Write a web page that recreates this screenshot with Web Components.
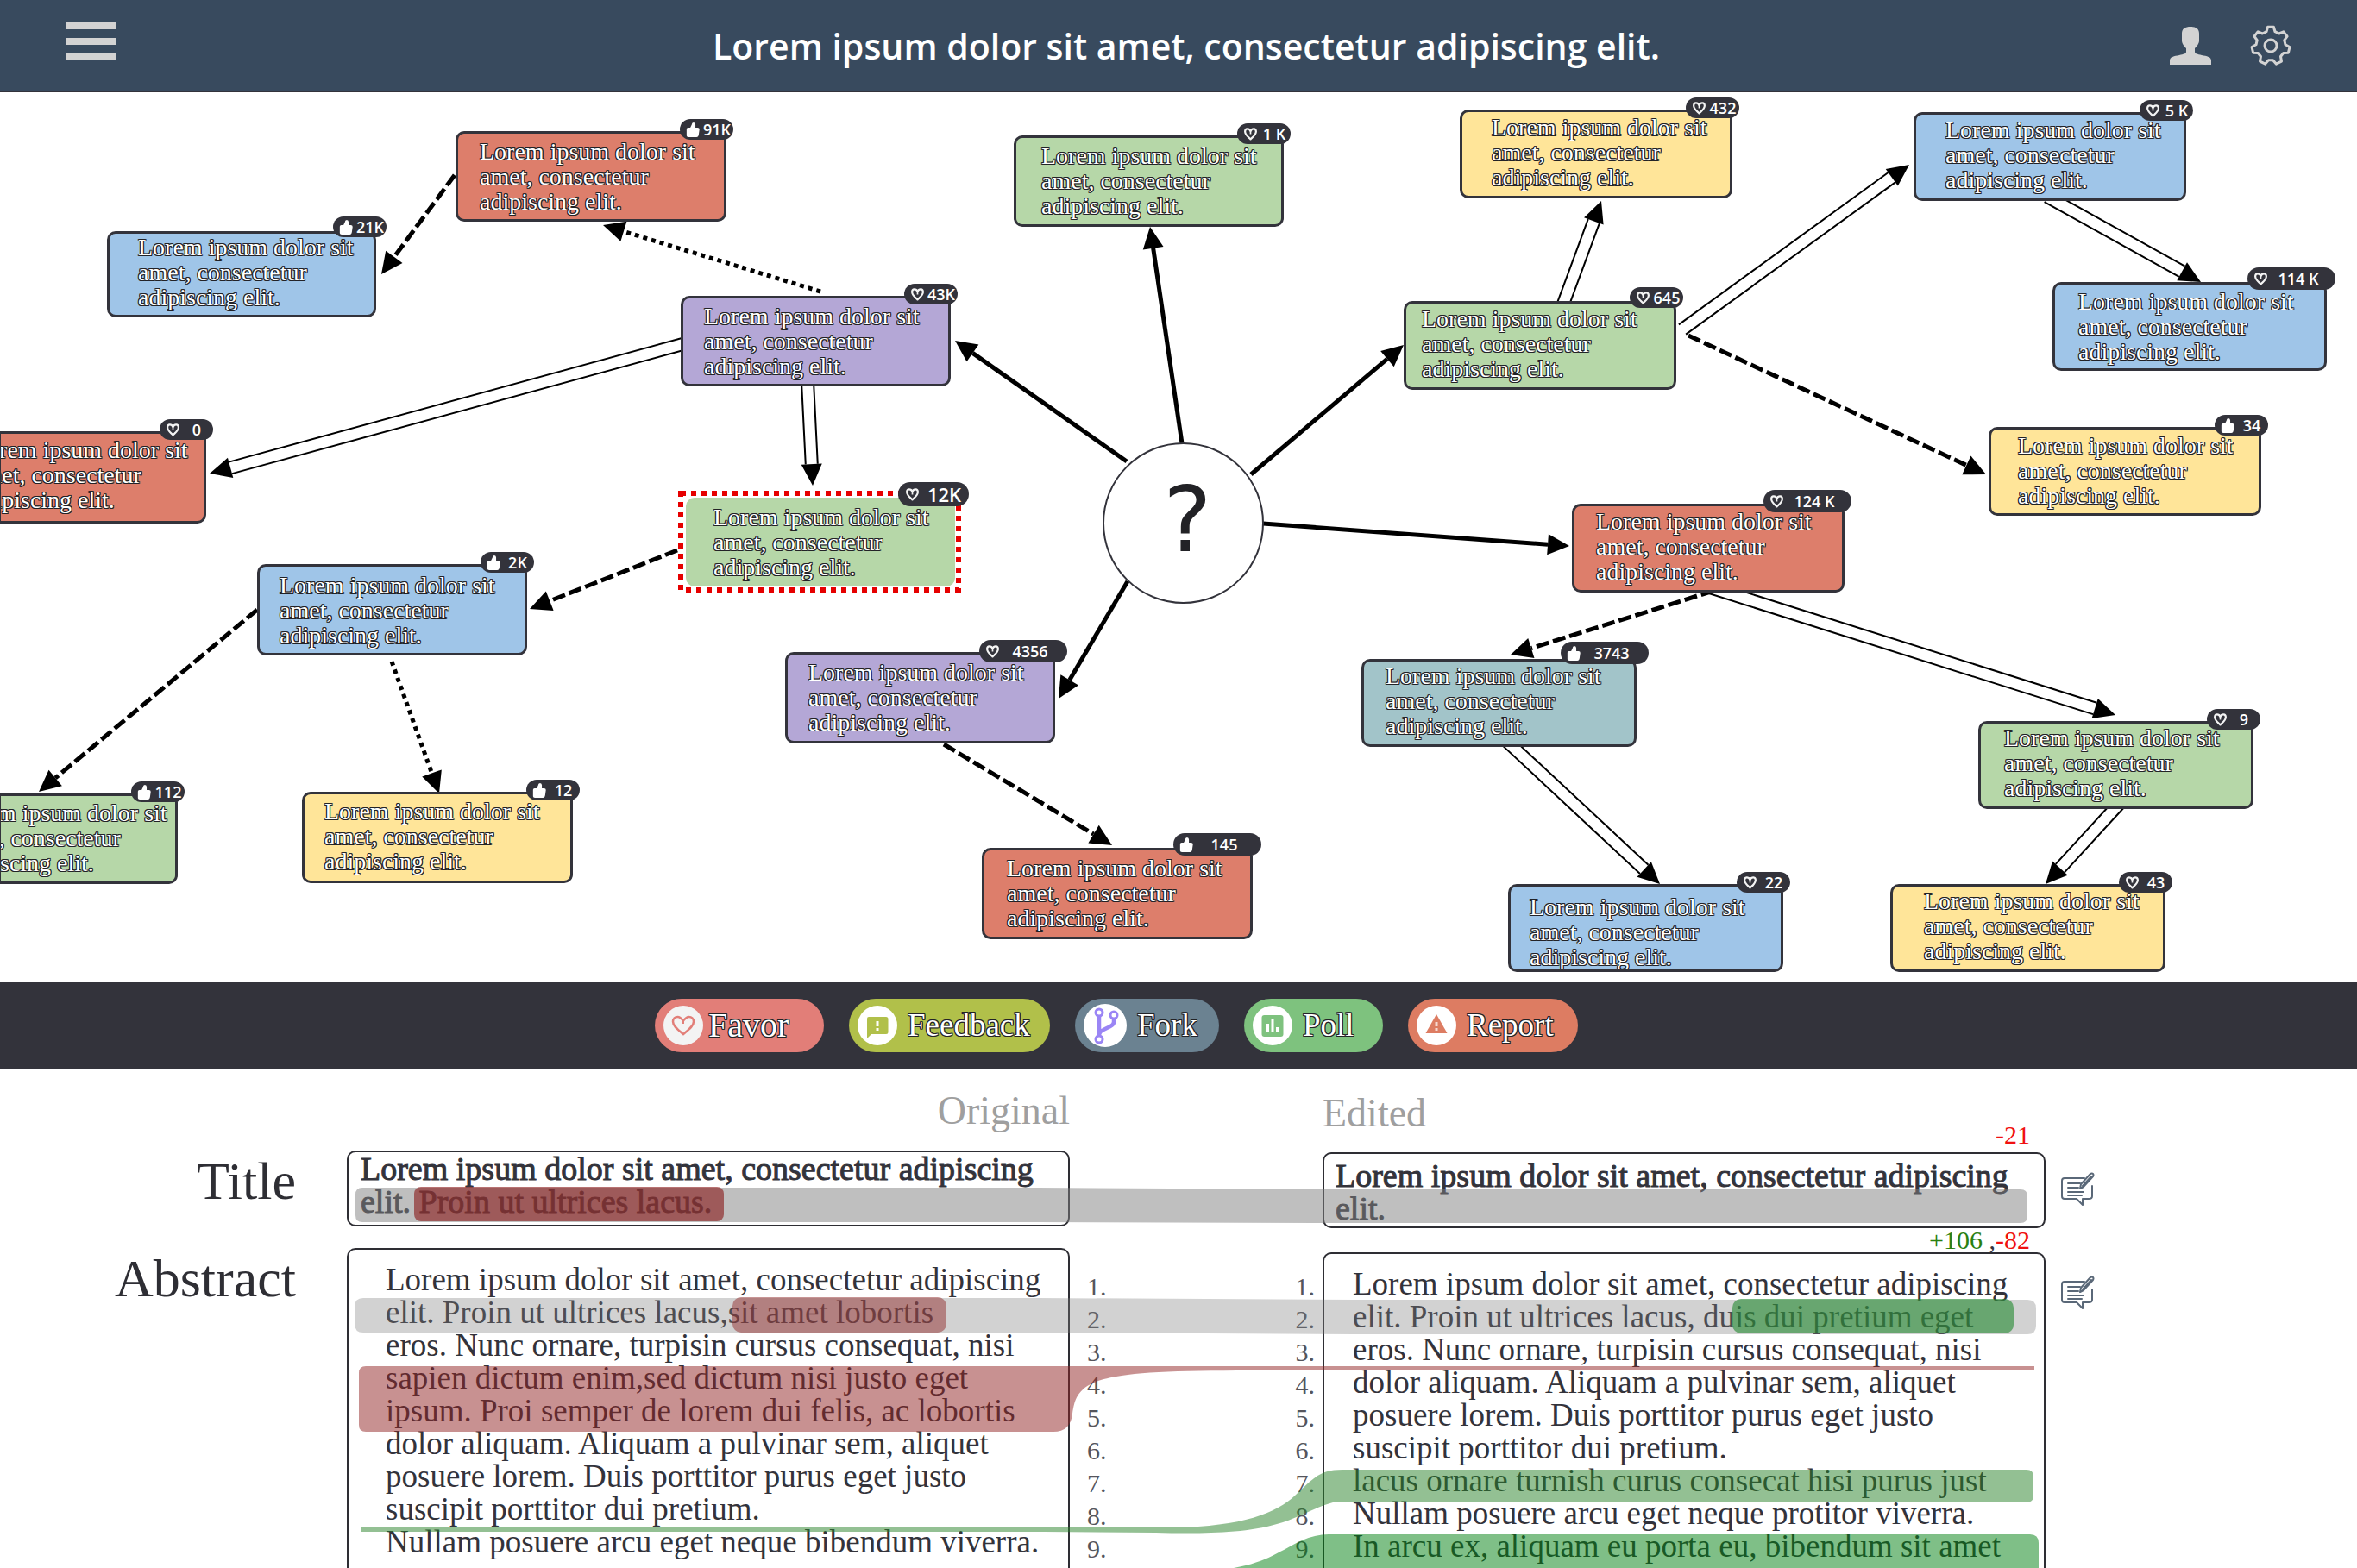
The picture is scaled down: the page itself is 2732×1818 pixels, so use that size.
<!DOCTYPE html>
<html lang="la">
<head>
<meta charset="utf-8">
<title>Idea map</title>
<style>
  html, body { margin: 0; }
  body {
    display: flex;
    flex-direction: column;
    height: 100vh;
    overflow: hidden;
    background: #fff;
    color: #33333b;
    font-family: "Liberation Serif", "Times New Roman", serif;
  }
  app-header, idea-map, action-bar { flex: none; }
  compare-view { flex: 1; min-height: 0; }
</style>
</head>
<body>
<app-header>Lorem ipsum dolor sit amet, consectetur adipiscing elit.</app-header>

<idea-map>
  <idea-node at="528,45" size="314,105" text="28,9" tone="red" icon="thumb" votes="91K">Lorem ipsum dolor sit amet, consectetur adipiscing elit.</idea-node>
  <idea-node at="124,161" size="312,100" text="36,4" tone="blue" icon="thumb" votes="21K" badge="12,17">Lorem ipsum dolor sit amet, consectetur adipiscing elit.</idea-node>
  <idea-node at="0,393" size="239,107" text="-30,7" tone="red" icon="heart" votes="0" cut>Lorem ipsum dolor sit amet, consectetur adipiscing elit.</idea-node>
  <idea-node at="789,236" size="313,105" text="27,9" tone="purple" icon="heart" votes="43K">Lorem ipsum dolor sit amet, consectetur adipiscing elit.</idea-node>
  <idea-node at="1175,50" size="313,106" text="32,9" tone="green" icon="heart" votes="1 K">Lorem ipsum dolor sit amet, consectetur adipiscing elit.</idea-node>
  <idea-node at="1692,20" size="316,103" text="37,6" tone="yellow" icon="heart" votes="432">Lorem ipsum dolor sit amet, consectetur adipiscing elit.</idea-node>
  <idea-node at="2218,23" size="316,103" text="37,6" tone="blue" icon="heart" votes="5 K">Lorem ipsum dolor sit amet, consectetur adipiscing elit.</idea-node>
  <idea-node at="2379,220" size="318,103" text="30,8" tone="blue" icon="heart" votes="114 K" badge="10,17" wide>Lorem ipsum dolor sit amet, consectetur adipiscing elit.</idea-node>
  <idea-node at="1627,242" size="316,103" text="21,6" tone="green" icon="heart" votes="645" badge="8,16">Lorem ipsum dolor sit amet, consectetur adipiscing elit.</idea-node>
  <idea-node at="2305,388" size="316,103" text="34,7" tone="yellow" icon="thumb" votes="34">Lorem ipsum dolor sit amet, consectetur adipiscing elit.</idea-node>
  <idea-node at="1822,477" size="316,103" text="28,6" tone="red" icon="heart" votes="124 K" badge="8,16" wide>Lorem ipsum dolor sit amet, consectetur adipiscing elit.</idea-node>
  <idea-node at="1578,657" size="319,102" text="28,5" tone="teal" icon="thumb" votes="3743" badge="14,20" wide>Lorem ipsum dolor sit amet, consectetur adipiscing elit.</idea-node>
  <idea-node at="2293,729" size="319,102" text="30,5" tone="green" icon="heart" votes="9">Lorem ipsum dolor sit amet, consectetur adipiscing elit.</idea-node>
  <idea-node at="1748,918" size="319,102" text="25,12" tone="blue" icon="heart" votes="22">Lorem ipsum dolor sit amet, consectetur adipiscing elit.</idea-node>
  <idea-node at="2191,918" size="319,102" text="39,5" tone="yellow" icon="heart" votes="43">Lorem ipsum dolor sit amet, consectetur adipiscing elit.</idea-node>
  <idea-node at="298,547" size="313,106" text="26,10" tone="blue" icon="thumb" votes="2K">Lorem ipsum dolor sit amet, consectetur adipiscing elit.</idea-node>
  <idea-node at="0,813" size="206,105" text="-54,8" tone="green" icon="thumb" votes="112" cut>Lorem ipsum dolor sit amet, consectetur adipiscing elit.</idea-node>
  <idea-node at="350,811" size="314,106" text="26,8" tone="yellow" icon="thumb" votes="12">Lorem ipsum dolor sit amet, consectetur adipiscing elit.</idea-node>
  <idea-node at="795,470" size="312,103" text="32,8" tone="green" icon="heart" votes="12K" badge="16,18" selected>Lorem ipsum dolor sit amet, consectetur adipiscing elit.</idea-node>
  <idea-node at="910,649" size="313,106" text="27,9" tone="purple" icon="heart" votes="4356" badge="14,14" wide>Lorem ipsum dolor sit amet, consectetur adipiscing elit.</idea-node>
  <idea-node at="1138,876" size="314,106" text="29,9" tone="red" icon="thumb" votes="145" badge="10,17" wide>Lorem ipsum dolor sit amet, consectetur adipiscing elit.</idea-node>
</idea-map>

<action-bar>
  <action-button icon="favor" style="--tone:#e27e78;--width:196px;--gap:6px;--size:40px">Favor</action-button>
  <action-button icon="feedback" style="--tone:#b1c04a;--width:233px">Feedback</action-button>
  <action-button icon="fork" style="--tone:#6b8291;--width:167px">Fork</action-button>
  <action-button icon="poll" style="--tone:#7ec27e;--width:161px">Poll</action-button>
  <action-button icon="report" style="--tone:#dd7c62;--width:197px">Report</action-button>
</action-bar>

<compare-view></compare-view>

<script>
const ICONS = {
  heart: '<svg viewBox="0 0 20 20"><path d="M10 17C7 14 2.500 11 2.500 6.500C2.500 2 8 1.500 10 6C12 1.500 17.500 2 17.500 6.500C17.500 11 13 14 10 17Z" fill="none" stroke="#f4f4f4" stroke-width="2.600" stroke-linejoin="round"/><path d="M10 6v4" stroke="#f4f4f4" stroke-width="2"/></svg>',
  thumb: '<svg viewBox="0 0 20 20"><path d="M1 9q0-2 2-2h3l2-4q0-3 2.500-3q2.500 0 2.500 3v4h3q2.500 0 2.500 2.500l-1 7q-.5 3.500-3 3.500H3.500Q1 20 1 18Z" fill="#fff"/></svg>',
  favor: '<svg viewBox="0 0 46 46"><circle cx="23" cy="23" r="23" fill="#f3f3f3"/><path d="M23 33C17 28 11 24 11 18.500C11 15 13.500 13 16.500 13C19.500 13 21 15 23 17.500C25 15 26.500 13 29.500 13C32.500 13 35 15 35 18.500C35 24 29 28 23 33Z" fill="none" stroke="#e27e78" stroke-width="2.500"/><path d="M23 17v4" stroke="#e27e78" stroke-width="2"/></svg>',
  feedback: '<svg viewBox="0 0 46 46"><circle cx="23" cy="23" r="23" fill="#fff"/><path d="M13 13h20q2.500 0 2.500 2.500v15q0 2.500-2.500 2.500H16l-5 5V15q0-2 2-2Z" fill="#b1c04a"/><path d="M21.500 18h3v6h-3zM21.500 26h3v3h-3z" fill="#fff"/></svg>',
  fork: '<svg viewBox="0 0 50 50"><circle cx="25" cy="25" r="25" fill="#fff"/><g fill="none" stroke="#9a85f5" stroke-width="3"><circle cx="18" cy="10" r="4"/><circle cx="35" cy="13" r="4"/><circle cx="18" cy="41" r="4"/></g><path d="M18 14v23M35 17v4q0 3-4 5l-8 4q-5 2-5 7" fill="none" stroke="#9a85f5" stroke-width="4.500"/></svg>',
  poll: '<svg viewBox="0 0 46 46"><circle cx="23" cy="23" r="23" fill="#fff"/><rect x="10.500" y="11" width="25" height="25" rx="3" fill="#7ec27e"/><path d="M16 21h3v10h-3zM21.500 16h3v15h-3zM27 25h3v6h-3z" fill="#fff"/></svg>',
  report: '<svg viewBox="0 0 46 46"><circle cx="23" cy="23" r="23" fill="#fff"/><path d="M23 10 35.500 32H10.500Z" fill="#dd7c62"/><path d="M21.500 19h3v5h-3zM21.500 26h3v3h-3z" fill="#f6d9d1"/></svg>',
  note: '<svg viewBox="0 0 40 40" fill="none" stroke="#5a6878" stroke-width="2" stroke-linejoin="round" stroke-linecap="round"><path d="M27 7H4q-3 0-3 3v18q0 3 3 3h14l7 7v-7h7q4 0 4-3V16"/><path d="M8 13h14M8 18h12M8 23h18M8 27h16"/><path d="M22 19l1-5L34 2q2-1 3 0t0 3L26 17ZM25 16l10-11" fill="#fff"/></svg>'
};

const OUTLINE = '1px 0 #222226, -1px 0 #222226, 0 1px #222226, 0 -1px #222226, 1px 1px #222226, -1px 1px #222226, 1px -1px #222226, -1px -1px #222226';

const define = (tag, markup, setup) => {
  const template = document.createElement('template');
  template.innerHTML = markup;
  customElements.define(tag, class extends HTMLElement {
    connectedCallback() {
      if (this.shadowRoot) return;
      const root = this.attachShadow({ mode: 'open' });
      root.append(template.content.cloneNode(true));
      if (setup) setup(this, root);
    }
  });
};

/* Outline of a cog with the given number of teeth, centred on 24,24. */
const cog = teeth => {
  const points = [];
  for (let i = 0; i < teeth; i++) {
    for (const [offset, radius] of [[-17, 17], [-9, 22], [9, 22], [17, 17]]) {
      const a = (i * 360 / teeth - 90 + offset) * Math.PI / 180;
      points.push((24 + radius * Math.cos(a)).toFixed(1) + ',' + (24 + radius * Math.sin(a)).toFixed(1));
    }
  }
  return points.join(' ');
};

define('app-header', `
<style>
  :host { display: block; }
  header {
    display: grid; grid-template-columns: 1fr auto 1fr; align-items: center;
    box-sizing: border-box; height: 107px; padding: 0 76px;
    background: #384a5e; border-bottom: 1px solid #33333b;
  }
  h1 { margin: 0; padding-left: 18px; color: #fff; font: 600 41px/60px "Open Sans", "Noto Sans", sans-serif; }
  button { display: block; padding: 0; border: 0; background: none; }
  svg { display: block; }
  nav { display: flex; gap: 45px; justify-content: flex-end; align-items: center; }
  .menu { justify-self: start; margin-bottom: 10px; }
</style>
<header>
  <button class="menu" aria-label="Menu"><svg width="58" height="44" fill="#d3d3d3"><path d="M0 0h58v8H0zM0 18h58v8H0zM0 36h58v8H0z"/></svg></button>
  <h1><slot></slot></h1>
  <nav>
    <button aria-label="Profile"><svg width="48" height="44" fill="#d3d3d3"><path d="M24 0c-6 0-10 2-10 8v8c0 4 3 7 5 9v4c0 2-3 3-8 4-6 1-11 2-11 6v5h48v-5c0-4-5-5-11-6-5-1-8-2-8-4v-4c2-2 5-5 5-9V8c0-6-4-8-10-8z"/></svg></button>
    <button aria-label="Settings"><svg width="48" height="48" fill="none" stroke="#d3d3d3" stroke-width="3" stroke-linejoin="round"><polygon points="${cog(7)}"/><circle cx="24" cy="24" r="7"/></svg></button>
  </nav>
</header>`);

define('idea-node', `
<style>
  :host {
    position: absolute; display: block; box-sizing: border-box;
    border: 3px solid #33333b; border-radius: 10px; background: var(--tone);
  }
  :host([tone=red]) { --tone: #dd7e6b; }
  :host([tone=blue]) { --tone: #9fc5e8; }
  :host([tone=green]) { --tone: #b6d7a8; }
  :host([tone=yellow]) { --tone: #ffe599; }
  :host([tone=purple]) { --tone: #b4a7d6; }
  :host([tone=teal]) { --tone: #a2c4c9; }
  :host([cut]) { border-left-width: 1px; border-radius: 0 10px 10px 0; }
  :host([selected]) { border-color: var(--tone); }
  .frame { display: none; }
  :host([selected]) .frame {
    display: block; position: absolute; left: -12px; top: -11px; width: 328px; height: 118px;
  }
  .clip { height: 100%; overflow: hidden; }
  p {
    margin: 0; width: 256px; color: #fff; font-size: 28px; line-height: 29px;
    text-shadow: ${OUTLINE};
  }
  .badge {
    position: absolute; display: flex; align-items: center; box-sizing: border-box;
    width: 62px; height: 24px; padding-left: 7px; border-radius: 12px;
    background: #33333b; color: #fff; font: 600 18px/24px "Open Sans", "Noto Sans", sans-serif;
  }
  :host([wide]) .badge { width: 102px; height: 26px; padding-right: 8px; border-radius: 13px; }
  :host([selected]) .badge { width: 82px; height: 28px; padding-left: 8px; border-radius: 14px; font-size: 22px; }
  .badge svg { flex: none; width: 17px; height: 17px; }
  .badge span { flex: 1; text-align: center; white-space: nowrap; }
</style>
<svg class="frame"><rect x="3" y="3" width="322" height="112" fill="none" stroke="#e60000" stroke-width="6" stroke-dasharray="6 6"/></svg>
<div class="clip"><p><slot></slot></p></div>
<div class="badge"><i></i><span></span></div>`, (host, root) => {
  const pair = (name, fallback) => (host.getAttribute(name) || fallback).split(',').map(Number);
  const [x, y] = pair('at'), [w, h] = pair('size'), [tx, ty] = pair('text'), [right, up] = pair('badge', '8,14');
  host.style.cssText = `left:${x}px;top:${y}px;width:${w}px;height:${h}px`;
  root.querySelector('p').style.margin = `${ty - 3}px 0 0 ${tx - 3}px`;
  const badge = root.querySelector('.badge');
  badge.style.right = `${-right - 3}px`;
  badge.style.top = `${-up - 3}px`;
  root.querySelector('i').outerHTML = ICONS[host.getAttribute('icon')];
  root.querySelector('span').textContent = host.getAttribute('votes');
});

/* kind, start x, start y, tip x, tip y */
const LINKS = [
  ['solid', 1306, 428, 1107, 288], ['solid', 1370, 407, 1333, 156], ['solid', 1450, 443, 1627, 293],
  ['solid', 1464, 500, 1819, 526], ['solid', 1307, 567, 1227, 703],
  ['double', 795, 291, 243, 442], ['double', 936, 335, 942, 456], ['double', 1811, 248, 1856, 126],
  ['double', 1950, 275, 2213, 84], ['double', 2373, 121, 2551, 220], ['double', 1982, 574, 2452, 722],
  ['double', 1745, 751, 1924, 918], ['double', 2460, 821, 2371, 918],
  ['dashed', 527, 96, 442, 211], ['dashed', 785, 531, 614, 599], ['dashed', 298, 600, 45, 811],
  ['dashed', 1957, 282, 2302, 443], ['dashed', 1986, 578, 1751, 652], ['dashed', 1094, 756, 1289, 873],
  ['dotted', 951, 231, 699, 154], ['dotted', 454, 660, 509, 813]
];

define('idea-map', `
<style>
  :host { position: relative; display: block; height: 1031px; overflow: hidden; }
  .links { position: absolute; left: 0; top: 0; width: 100%; height: 100%; pointer-events: none; }
  .links path { fill: none; stroke: #000; stroke-width: 5; }
  .links .double { stroke-width: 2; }
  .links .dashed { stroke-dasharray: 15 5; }
  .links .dotted { stroke-dasharray: 5 5; }
  .hub {
    position: absolute; left: 1278px; top: 406px; box-sizing: border-box; width: 187px; height: 187px;
    padding-left: 10px; border: 2px solid #33333b; border-radius: 50%; background: #fff; color: #222226;
    text-align: center; font: 106px/176px "DejaVu Sans", sans-serif;
  }
</style>
<svg class="links"></svg>
<slot></slot>
<div class="hub">?</div>`, (host, root) => {
  root.querySelector('.links').innerHTML = LINKS.map(([kind, x1, y1, x2, y2]) => {
    const length = Math.hypot(x2 - x1, y2 - y1), ux = (x2 - x1) / length, uy = (y2 - y1) / length;
    const bx = x2 - ux * 25, by = y2 - uy * 25;
    const shift = side => `M${x1 - uy * side} ${y1 + ux * side}L${bx - uy * side} ${by + ux * side}`;
    const d = kind === 'double' ? shift(7) + shift(-7) : shift(0);
    return `<path class="${kind}" d="${d}"/><polygon points="${x2},${y2} ${bx - uy * 12},${by + ux * 12} ${bx + uy * 12},${by - ux * 12}"/>`;
  }).join('');
});

define('action-bar', `
<style>
  :host {
    display: flex; align-items: center; gap: 29px; box-sizing: border-box;
    height: 101px; padding-left: 759px; background: #33333b;
  }
</style>
<slot></slot>`);

define('action-button', `
<style>
  :host { display: block; }
  button {
    display: flex; align-items: center; gap: var(--gap, 12px); width: var(--width); height: 62px;
    padding: 0 0 0 10px; border: 0; border-radius: 31px; background: var(--tone); color: #fff;
    font: var(--size, 37px)/48px "Liberation Serif", "Times New Roman", serif; text-align: left;
    text-shadow: ${OUTLINE};
  }
  svg { flex: none; display: block; width: 46px; height: 46px; }
  :host([icon=fork]) svg { width: 50px; height: 50px; }
</style>
<button><i></i><slot></slot></button>`, (host, root) => {
  root.querySelector('i').outerHTML = ICONS[host.getAttribute('icon')];
});

define('text-panel', `
<style>
  :host {
    display: block; box-sizing: border-box; border: 2px solid #2e2e34; border-radius: 10px;
    font-size: 37px; line-height: 38px; white-space: nowrap;
  }
  :host([strong]) { font-size: 38px; -webkit-text-stroke: 1px #33333b; }
</style>
<slot></slot>`);

define('line-numbers', `
<style>
  :host { display: block; }
  ol { margin: 0; padding: 234px 0 0; list-style: none; font-size: 30px; line-height: 38px; color: #55555c; }
</style>
<ol></ol>`, (host, root) => {
  root.querySelector('ol').innerHTML = [1, 2, 3, 4, 5, 6, 7, 8, 9].map(n => `<li>${n}.</li>`).join('');
});

define('compare-view', `
<style>
  :host {
    position: relative; display: grid; overflow: hidden;
    grid-template-columns: 402px minmax(0, 1fr) 293px minmax(0, 1fr) 361px;
  }
  h2, h3 { margin: 0; font-weight: 400; }
  .labels { padding: 94px 59px 0 0; text-align: right; }
  .labels h2 { margin-bottom: 41px; font-size: 62px; line-height: 72px; color: #2e2e34; }
  .original { padding-top: 21px; }
  .edited { padding-top: 24px; }
  h3 { font-size: 46px; line-height: 56px; color: #9f9f9f; }
  .original h3 { margin-bottom: 18px; text-align: right; }
  .head { display: flex; justify-content: space-between; align-items: flex-start; height: 73px; }
  .count { margin: 0; padding-right: 18px; font-size: 30px; line-height: 28px; text-align: right; }
  .head .count { align-self: flex-end; padding-bottom: 6px; }
  .minus { color: #f01010; }
  .plus { color: #2a8010; }
  .original .title { padding: 0 0 8px 14px; margin-bottom: 25px; }
  .edited .title { padding: 6px 0 2px 13px; }
  .original .abstract { padding: 16px 0 16px 43px; }
  .edited .abstract { padding: 16px 0 16px 33px; }
  .numbers { display: flex; justify-content: space-between; padding: 0 9px 0 20px; }
  .notes { display: flex; flex-direction: column; align-items: flex-start; gap: 80px; padding: 120px 0 0 18px; }
  .notes button { width: 40px; height: 40px; padding: 0; border: 0; background: none; }
  .notes svg { display: block; }
  .marks { position: absolute; left: 0; top: 0; width: 100%; height: 100%; pointer-events: none; }
</style>
<div class="labels"><h2>Title</h2><h2>Abstract</h2></div>
<section class="original">
  <h3>Original</h3>
  <text-panel class="title" strong>Lorem ipsum dolor sit amet, consectetur adipiscing<br>elit. Proin ut ultrices lacus.</text-panel>
  <text-panel class="abstract">Lorem ipsum dolor sit amet, consectetur adipiscing<br>elit. Proin ut ultrices lacus,sit amet lobortis<br>eros. Nunc ornare, turpisin cursus consequat, nisi<br>sapien dictum enim,sed dictum nisi justo eget<br>ipsum. Proi semper de lorem dui felis, ac lobortis<br>dolor aliquam. Aliquam a pulvinar sem, aliquet<br>posuere lorem. Duis porttitor purus eget justo<br>suscipit porttitor dui pretium.<br>Nullam posuere arcu eget neque bibendum viverra.<br>&nbsp;</text-panel>
</section>
<div class="numbers"><line-numbers></line-numbers><line-numbers></line-numbers></div>
<section class="edited">
  <div class="head"><h3>Edited</h3><p class="count"><span class="minus">-21</span></p></div>
  <text-panel class="title" strong>Lorem ipsum dolor sit amet, consectetur adipiscing<br>elit.</text-panel>
  <p class="count"><span class="plus">+106</span> ,<span class="minus">-82</span></p>
  <text-panel class="abstract">Lorem ipsum dolor sit amet, consectetur adipiscing<br>elit. Proin ut ultrices lacus, duis dui pretium eget<br>eros. Nunc ornare, turpisin cursus consequat, nisi<br>dolor aliquam. Aliquam a pulvinar sem, aliquet<br>posuere lorem. Duis porttitor purus eget justo<br>suscipit porttitor dui pretium.<br>lacus ornare turnish curus consecat hisi purus just<br>Nullam posuere arcu eget neque protitor viverra.<br>In arcu ex, aliquam eu porta eu, bibendum sit amet<br>&nbsp;</text-panel>
</section>
<div class="notes">
  <button aria-label="Comment on title">${ICONS.note}</button>
  <button aria-label="Comment on abstract">${ICONS.note}</button>
</div>
<svg class="marks">
  <path d="M420 138H1203L1546 140H2342q8 0 8 8v23q0 8-8 8H1546L1203 178H420q-8 0-8-8v-24q0-8 8-8Z" fill="rgba(127,127,127,.5)"/>
  <rect x="480" y="137" width="359" height="40" rx="8" fill="rgba(137,24,24,.6)"/>
  <path d="M421 266H1203L1570 268H2350q10 0 10 10v20q0 10-10 10H1570L1203 306H421q-10 0-10-10v-20q0-10 10-10Z" fill="rgba(127,127,127,.35)"/>
  <rect x="849" y="265" width="248" height="41" rx="10" fill="rgba(145,45,45,.5)"/>
  <rect x="2008" y="267" width="326" height="40" rx="10" fill="rgba(33,136,46,.6)"/>
  <path d="M424 345H2358V350H1505C1400 350 1337 350 1300 356C1250 363 1246 380 1243 400Q1241 421 1221 421H424q-8 0-8-8v-60q0-8 8-8Z" fill="rgba(146,35,35,.5)"/>
  <path d="M419 532H1361C1440 531 1480 515 1501 495C1522 475 1530 465 1556 465H2349q8 0 8 8v22q0 8-8 8H1545C1520 510 1508 520 1480 528C1440 540 1380 539 1340 538L1210 537H419Z" fill="rgba(40,130,40,.5)"/>
  <path d="M1430 579C1470 572 1485 558 1509 547Q1525 540 1540 540H2353q10 0 10 10V590H1430Z" fill="rgba(0,128,16,.5)"/>
</svg>`);
</script>
</body>
</html>
